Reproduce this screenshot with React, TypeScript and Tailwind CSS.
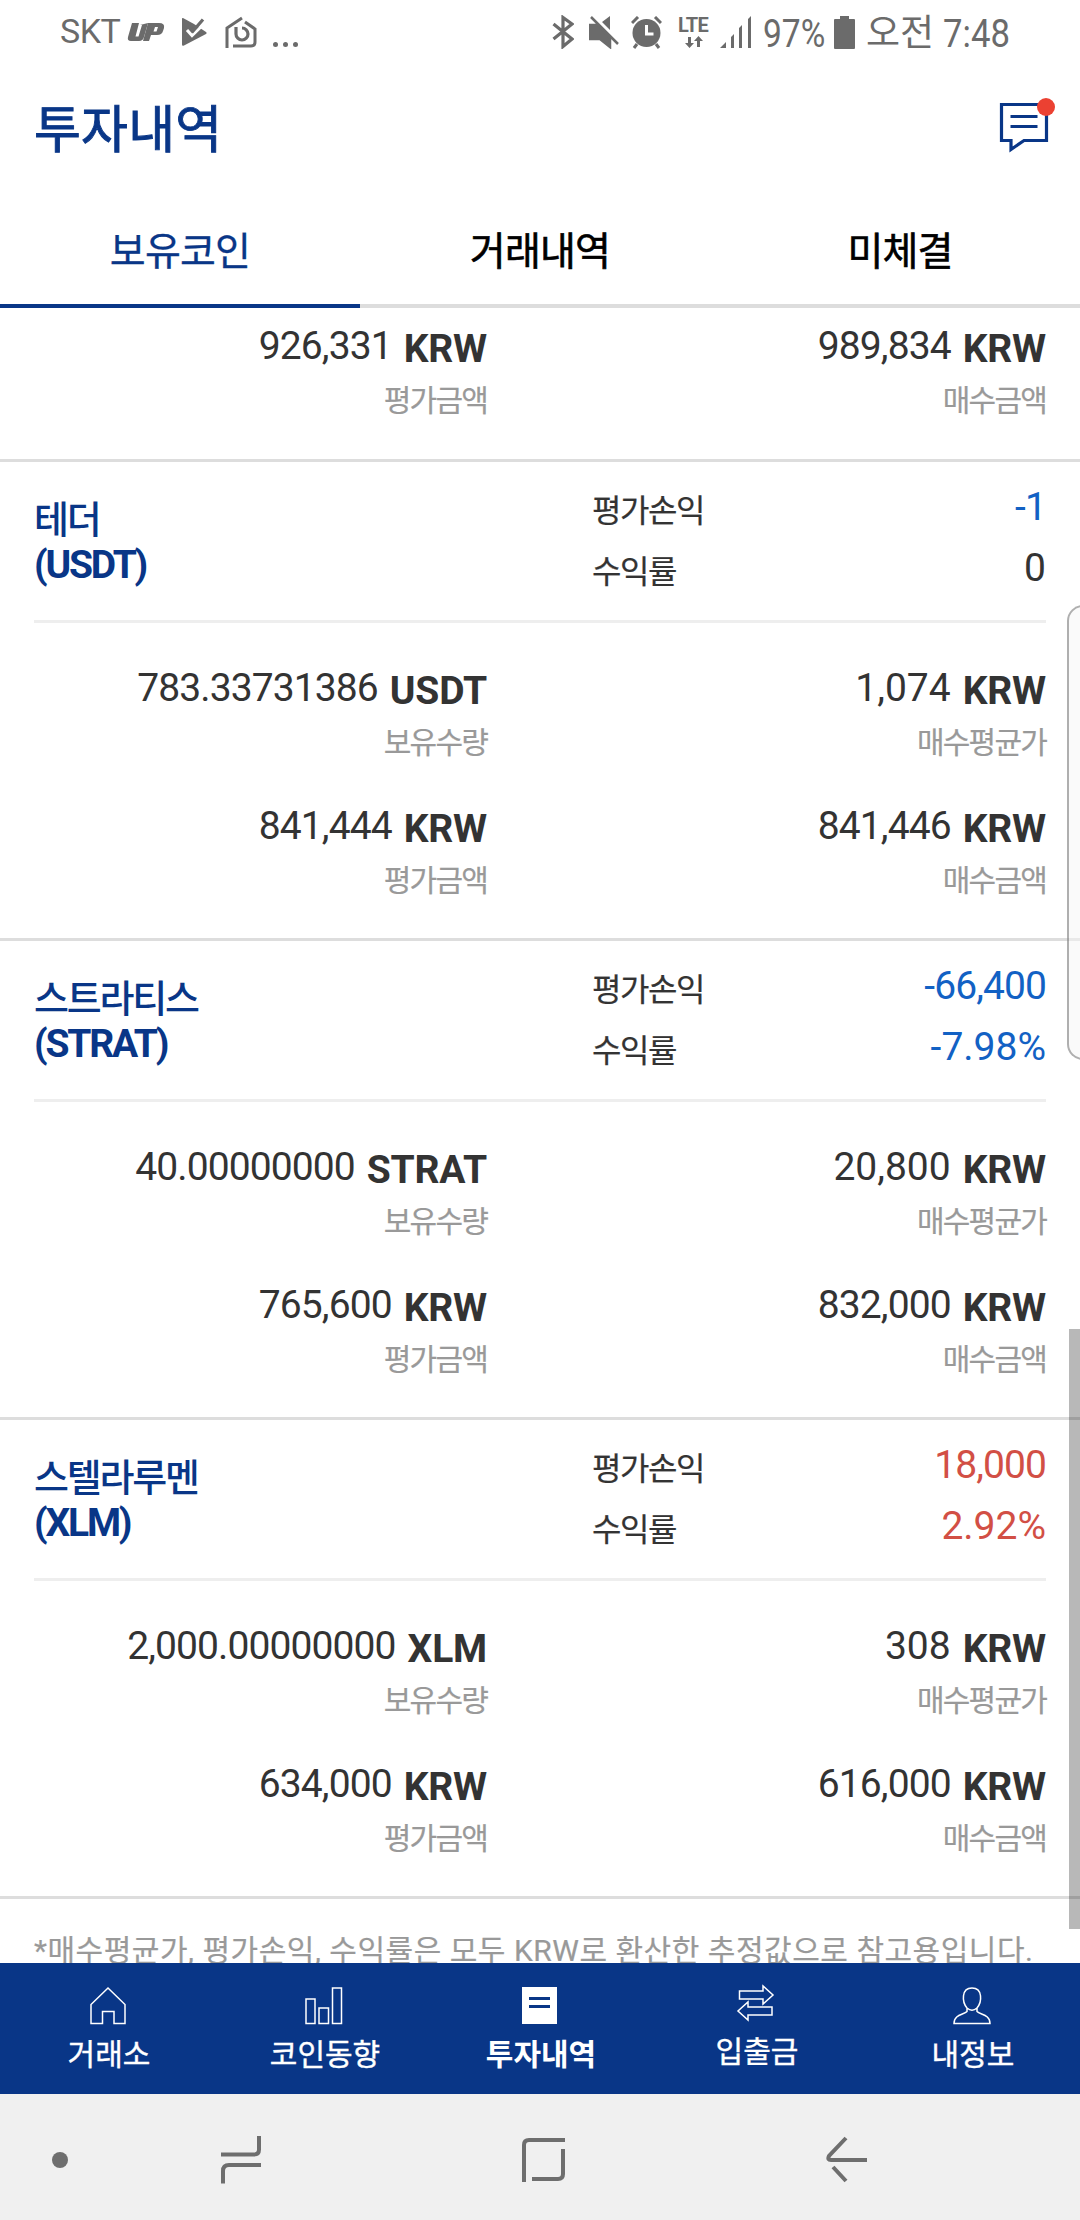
import type { ReactNode } from 'react'

type Tone = 'plain' | 'up' | 'down'

interface Coin {
  name: string
  symbol: string
  profit: string
  rate: string
  profitTone: Tone
  rateTone: Tone
  amount: string
  avgPrice: string
  evalPrice: string
  buyPrice: string
}

const COINS: Coin[] = [
  {
    name: '테더',
    symbol: 'USDT',
    profit: '-1',
    rate: '0',
    profitTone: 'down',
    rateTone: 'plain',
    amount: '783.33731386',
    avgPrice: '1,074',
    evalPrice: '841,444',
    buyPrice: '841,446',
  },
  {
    name: '스트라티스',
    symbol: 'STRAT',
    profit: '-66,400',
    rate: '-7.98%',
    profitTone: 'down',
    rateTone: 'down',
    amount: '40.00000000',
    avgPrice: '20,800',
    evalPrice: '765,600',
    buyPrice: '832,000',
  },
  {
    name: '스텔라루멘',
    symbol: 'XLM',
    profit: '18,000',
    rate: '2.92%',
    profitTone: 'up',
    rateTone: 'up',
    amount: '2,000.00000000',
    avgPrice: '308',
    evalPrice: '634,000',
    buyPrice: '616,000',
  },
]

const TONE_CLASS: Record<Tone, string> = {
  plain: 'text-[#333333]',
  up: 'text-[#d24f45]',
  down: 'text-[#1261c4]',
}

function StatusBar() {
  return (
    <div className="flex h-16 shrink-0 items-start justify-between pl-[60px] pr-[69px] text-[#6b6b6b]">
      <div className="flex items-start">
        <span className="w-[67px] text-[34px] leading-[63px] tracking-[-0.5px]">SKT</span>
        {/* carrier badge, reminder and home notifications */}
        <svg className="mt-[22px] h-5 w-[38px]" viewBox="0 0 38 20" fill="currentColor">
          <path d="M5 1h7L8.500 14.500h3L15 3h-2l8-2-4 14q-1 4-5 4H4q-4 0-3-4z" />
          <path d="M21 1h11q6 0 5 5l-1 3q-1 4-6 4h-6l-2 6h-6zM28 5l-1.500 4.500h3L31 5z" fillRule="evenodd" />
        </svg>
        <svg className="ml-4 mt-[17px] h-[31px] w-[27px]" viewBox="0 0 27 31">
          <path d="M2 1l11 6 12 8q1.500 1 0 2L3 28.500q-2 1-2-1V2q0-1.500 1-1z" fill="currentColor" />
          <path d="M6 13l5 5.500L25 5" fill="none" stroke="white" strokeWidth="3" />
          <path d="M10 11.500l2 2.500L22 2.500" fill="none" stroke="currentColor" strokeWidth="3.200" />
        </svg>
        <svg className="ml-[17px] mt-4 h-8 w-8" viewBox="0 0 32 32" fill="none" stroke="currentColor" strokeWidth="3">
          <path d="M2 32V12L17 2M20 6l10 7v13q0 4-4 4H8" />
          <path d="M11 11v7a6 6 0 1 0 6-6" strokeWidth="3.200" />
        </svg>
        <span className="ml-[16px] flex gap-[5px] pt-[42px]">
          <i className="h-[5px] w-[5px] rounded-full bg-[#6b6b6b]" />
          <i className="h-[5px] w-[5px] rounded-full bg-[#6b6b6b]" />
          <i className="h-[5px] w-[5px] rounded-full bg-[#6b6b6b]" />
        </span>
      </div>
      <div className="flex items-start">
        <svg className="mt-[15px] h-[34px] w-[22px]" viewBox="0 0 22 34" fill="none" stroke="currentColor" strokeWidth="3.200">
          <path d="M1.500 9L20 24l-9 7.500V2.500L20 9 1.500 24" />
        </svg>
        <svg className="ml-[15px] mt-4 h-[33px] w-[31px]" viewBox="0 0 31 33" fill="currentColor">
          <path d="M1 9h8l13 14v8L11 23H2q-1.500 0-1.500-2v-10q0-2 .5-2zM21 0v14l-8-8z" />
          <path d="M3 2l26 26" fill="none" stroke="white" strokeWidth="6" />
          <path d="M2 1l27 27M1 9h8l12 13v9L11 23H1z" stroke="currentColor" strokeWidth="2.500" />
        </svg>
        <svg className="ml-[11px] mt-4 h-[33px] w-[31px]" viewBox="0 0 31 33">
          <circle cx="15.500" cy="17" r="14" fill="currentColor" />
          <path d="M1 7l6-6M30 7l-6-6M6 28l-3 4M25 28l3 4" stroke="currentColor" strokeWidth="3" fill="none" />
          <path d="M15.500 9v9h7" stroke="white" strokeWidth="3" fill="none" />
        </svg>
        <div className="ml-4 w-[34px] pt-[15px]">
          <div className="h-5 text-[20px] font-bold leading-5 tracking-[-0.8px]">LTE</div>
          <svg className="ml-1.5 mt-[1px] h-3 w-5" viewBox="0 0 20 12" fill="currentColor">
            <path d="M4 1h3v6h3l-4.500 5L1 7h3zM13 11h3V5h3l-4.500-5L10 5h3z" />
          </svg>
        </div>
        <svg className="ml-2 mt-4 h-8 w-8" viewBox="0 0 32 32" fill="currentColor">
          <path d="M0 32l6-6v6zM11 21l3-3v14h-3zM19 12l3-3v23h-3zM28 3l3-3v32h-3z" />
        </svg>
        <span className="ml-[11px] w-[63px] whitespace-nowrap text-[39px] leading-[68px]">
          <span className="inline-block origin-left scale-x-[0.86]">97%</span>
        </span>
        <svg className="ml-2 mt-4 h-[33px] w-[21px]" viewBox="0 0 21 33" fill="currentColor">
          <path d="M6 0h9v3h5q1 0 1 1v28q0 1-1 1H1q-1 0-1-1V4q0-1 1-1h5z" />
        </svg>
        <span className="ml-[11px] w-[77px] text-[37px] leading-[68px]">오전</span>
        <span className="w-[68px] whitespace-nowrap text-[39px] leading-[68px]">
          <span className="inline-block origin-left scale-x-[0.89]">7:48</span>
        </span>
      </div>
    </div>
  )
}

function Header() {
  return (
    <header className="flex h-32 shrink-0 items-start justify-between pl-[34px] pr-[23px]">
      <h1 className="text-[51px] font-normal leading-[133px] tracking-[0.2px] [-webkit-text-stroke:0.9px]">투자내역</h1>
      <svg className="mt-[33px] h-[58px] w-[60px]" viewBox="0 0 60 58" fill="none" stroke="#093687" strokeWidth="3.200">
        <path d="M4.500 7.500h45v36H27L14 52.500v-9H4.500z" />
        <path d="M13.500 19.500h27M13.500 29.500h27" />
        <circle cx="49" cy="10" r="9" fill="#eb4132" stroke="none" />
      </svg>
    </header>
  )
}

function Tabs() {
  return (
    <div className="grid h-[116px] shrink-0 grid-cols-3 text-center text-[39px] leading-[120px] tracking-[-0.8px] text-black [-webkit-text-stroke:0.6px]">
      <div className="h-[116px] border-b-4 border-[#093687] text-[#093687] [-webkit-text-stroke:0.3px]">보유코인</div>
      <div className="h-[116px] border-b-4 border-[#dddddd]">거래내역</div>
      <div className="h-[116px] border-b-4 border-[#dddddd]">미체결</div>
    </div>
  )
}

interface CellProps {
  value: string
  unit: string
  label: string
  loose?: boolean
}

function Cell({ value, unit, label, loose }: CellProps) {
  return (
    <div className="h-[138px] text-right">
      <div className="flex h-[46px] justify-end gap-3 text-[39px] leading-[46px]">
        <span className={loose ? 'tracking-normal' : 'tracking-[-0.9px]'}>{value}</span>
        <span className="pt-[3px] font-bold tracking-[-0.2px]">{unit}</span>
      </div>
      <div className="text-[30px] leading-[64px] tracking-[-1.800px] text-[#999999] [-webkit-text-stroke:0.2px]">{label}</div>
    </div>
  )
}

function CellRow({ children }: { children: ReactNode }) {
  return <div className="grid grid-cols-[453px_1fr] px-[34px]">{children}</div>
}

function CoinCard({ coin }: { coin: Coin }) {
  return (
    <section className="h-[479px] shrink-0 border-t-[3px] border-[#dddddd]">
      <div className="mx-[34px] flex h-[161px] border-b-[3px] border-[#eeeeee]">
        <div className="w-[558px] pt-9 text-[39px] font-bold leading-[45px] tracking-[-2.200px] text-[#093687]">
          <div className="text-[38px] font-medium">{coin.name}</div>
          <div>({coin.symbol})</div>
        </div>
        <div className="flex-1 pt-[15px]">
          <div className="flex h-[61px] justify-between leading-[61px]">
            <span className="pt-1 text-[32px] tracking-[-1.400px] text-[#333333] [-webkit-text-stroke:0.2px]">평가손익</span>
            <span className={`text-[39px] tracking-[-0.9px] ${TONE_CLASS[coin.profitTone]}`}>{coin.profit}</span>
          </div>
          <div className="flex h-[61px] justify-between leading-[61px]">
            <span className="pt-1 text-[32px] tracking-[-1.400px] text-[#333333] [-webkit-text-stroke:0.2px]">수익률</span>
            <span className={`text-[39px] tracking-normal ${TONE_CLASS[coin.rateTone]}`}>{coin.rate}</span>
          </div>
        </div>
      </div>
      <div className="pt-[42px]">
        <CellRow>
          <Cell value={coin.amount} unit={coin.symbol} label="보유수량" />
          <Cell value={coin.avgPrice} unit="KRW" label="매수평균가" loose />
        </CellRow>
        <CellRow>
          <Cell value={coin.evalPrice} unit="KRW" label="평가금액" />
          <Cell value={coin.buyPrice} unit="KRW" label="매수금액" />
        </CellRow>
      </div>
    </section>
  )
}

interface NavItemProps {
  label: string
  active?: boolean
  raised?: boolean
  children: ReactNode
}

function NavItem({ label, active, raised, children }: NavItemProps) {
  return (
    <div className={`flex flex-col items-center ${raised ? 'pt-5' : 'pt-[23px]'}`}>
      <svg className="h-10 w-10" viewBox="0 0 40 40" fill="none" stroke="white" strokeWidth="1.500">
        {children}
      </svg>
      <div className={`pl-0.5 text-[30px] leading-[58px] ${active ? 'font-bold' : '[-webkit-text-stroke:0.4px]'}`}>{label}</div>
    </div>
  )
}

function BottomNav() {
  return (
    <nav className="grid h-[131px] shrink-0 grid-cols-5 bg-[#093687] text-white">
      <NavItem label="거래소">
        <path d="M20 2L37 18.500V37.500H26V25.500H14.500V37.500H3V18.500z" />
      </NavItem>
      <NavItem label="코인동향">
        <path d="M2 13h9v24.500H2zM15 22h9.500v15.500H15zM28.500 2h9v35.500h-9z" />
      </NavItem>
      <NavItem label="투자내역" active>
        <path d="M2 1h35v37H2z" fill="white" stroke="none" />
        <path d="M9 12.500h21M9 20.500h21" stroke="#093687" strokeWidth="3" />
      </NavItem>
      <NavItem label="입출금" raised>
        <path d="M3.500 8H27V3l10 9-10 9v-5H3.500zM36 32H12v5L2 28l10-9v5h24z" />
      </NavItem>
      <NavItem label="내정보">
        <path d="M15 22v3.500C12 29 2 28 2 37.500h36c0-9.500-10-8.500-13-12V22C30 16 31 2 20 2s-10 14-5 20q5 4.500 10 0" />
      </NavItem>
    </nav>
  )
}

function SystemNav() {
  return (
    <div className="flex h-[126px] shrink-0 items-center bg-[#f0f0f0] pl-[52px] pt-1.5 text-[#6e6e6e]">
      <span className="h-4 w-4 rounded-full bg-[#6e6e6e]" />
      <svg className="ml-[153px] h-12 w-10" viewBox="0 0 40 48" fill="none" stroke="currentColor" strokeWidth="4">
        <path d="M0 18.500h33q5 0 5-5V0M40 29H8q-6 0-6 6v12.500" />
      </svg>
      <svg className="ml-[261px] h-12 w-[43px]" viewBox="0 0 43 48" fill="none" stroke="currentColor" strokeWidth="4">
        <path d="M43 4H7Q2 4 2 9v37M41 13v25q0 5-5 5H10" />
      </svg>
      <svg className="ml-[261px] h-12 w-[41px]" viewBox="0 0 41 48" fill="none" stroke="currentColor" strokeWidth="4">
        <path d="M20 2L3 20q-2 4 2 4h36M7 31l13 14" />
      </svg>
    </div>
  )
}

export default function App() {
  return (
    <div className="relative flex h-[2220px] w-[1080px] flex-col overflow-hidden bg-white font-['Roboto','Noto_Sans_CJK_KR',sans-serif] text-[#093687]">
      <StatusBar />
      <Header />
      <Tabs />
      <main className="flex h-[1655px] shrink-0 flex-col overflow-hidden text-[#333333]">
        <div className="h-[151px] shrink-0 pt-[15px]">
          <CellRow>
            <Cell value="926,331" unit="KRW" label="평가금액" />
            <Cell value="989,834" unit="KRW" label="매수금액" />
          </CellRow>
        </div>
        {COINS.map((coin) => (
          <CoinCard key={coin.symbol} coin={coin} />
        ))}
        <p className="shrink-0 whitespace-nowrap border-t-[3px] border-[#dddddd] pl-[34px] text-[30px] leading-[104px] tracking-[0.52px] text-[#999999] [-webkit-text-stroke:0.2px]">
          *매수평균가, 평가손익, 수익률은 모두 KRW로 환산한 추정값으로 참고용입니다.
        </p>
      </main>
      <BottomNav />
      <SystemNav />

      {/* edge panel handle and scroll thumb float over the list */}
      <div className="absolute left-[1067px] top-[605px] h-[455px] w-8 rounded-2xl border-2 border-black/30 bg-[#f5f5f5]/50" />
      <div className="absolute right-0 top-[1329px] h-[600px] w-[11px] bg-black/28" />
    </div>
  )
}
